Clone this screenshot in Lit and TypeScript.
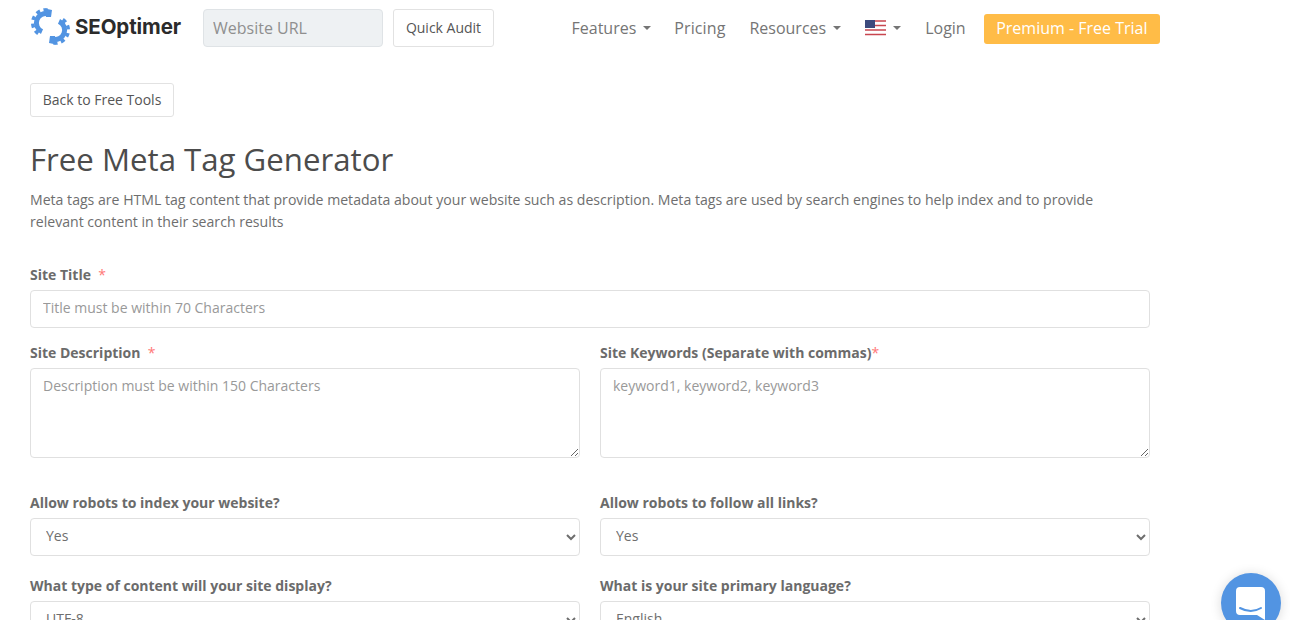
import { LitElement, html, css, svg } from 'lit';
import { customElement } from 'lit/decorators.js';

// one half of the logo, the other half is the same thing turned 180deg
const half = svg`
  <path d="M20.5 9.8A9.5 9.5 0 0 0 14 27.6" fill="none" stroke="#5294e2" stroke-width="5"/>
  <path d="M19.5 6A13 13 0 0 0 11 30" fill="none" stroke="#5294e2" stroke-width="3.5" stroke-dasharray="4 3.6"/>
  <path d="M17 4.5L24 6L23 13L18 13Z" fill="#5294e2"/>`;

@customElement('app-root')
export class AppRoot extends LitElement {
  static styles = css`
    :host {
      display: block;
      height: 620px;
      overflow: hidden;
      position: relative;
      background: #fff;
      font-family: 'Open Sans', sans-serif;
      font-size: 14px;
      color: #6e6e6e;
    }
    header {
      display: flex;
      align-items: center;
      height: 56px;
      padding-left: 30px;
      width: 1130px;
    }
    .logo {
      display: flex;
      align-items: center;
      width: 173px;
      height: 56px;
      flex: none;
    }
    .logo span {
      font-family: Inter, sans-serif;
      font-weight: 700;
      font-size: 20.5px;
      letter-spacing: -0.1px;
      color: #2b2b2b;
      margin-left: 1px;
      margin-top: -3px;
    }
    .logo svg {
      margin: -2px 0 0 -2px;
      flex: none;
    }
    .url {
      width: 180px;
      height: 38px;
      box-sizing: border-box;
      padding: 0 9px;
      background: #eef1f3;
      border: 1px solid #dfe3e6;
      border-radius: 4px;
      font: 16px 'Open Sans', sans-serif;
      margin-top: -1px;
    }
    .url::placeholder { color: #8f8f8f; opacity: 1; }
    .btn {
      display: inline-flex;
      align-items: center;
      justify-content: center;
      box-sizing: border-box;
      height: 34px;
      background: #fff;
      border: 1px solid #e2e2e2;
      border-radius: 3px;
      color: #555;
      font: 14px 'Open Sans', sans-serif;
    }
    .audit {
      width: 101px;
      height: 38px;
      margin: -1px 0 0 10px;
    }
    nav {
      display: flex;
      align-items: center;
      font-size: 16px;
      color: #757575;
      margin-left: auto;
    }
    nav a { display: inline-flex; align-items: center; margin-left: 24px; }
    nav a.pricing { margin-left: 23px; letter-spacing: 0.1px; }
    .caret {
      display: inline-block;
      width: 0;
      height: 0;
      margin-left: 7px;
      border-left: 4px solid transparent;
      border-right: 4px solid transparent;
      border-top: 4px solid #757575;
    }
    nav a.premium {
      height: 30px;
      box-sizing: border-box;
      padding: 0 12.5px 2px;
      margin: 2px 0 0 18px;
      background: #ffbc47;
      color: #fff;
      border-radius: 3px;
    }
    main {
      width: 1120px;
      padding: 27px 0 0 30px;
    }
    .back { width: 144px; padding-bottom: 2px; }
    h1 {
      font-weight: 400;
      font-size: 31.2px;
      line-height: 40px;
      color: #4c4c4c;
      margin: 22px 0 0;
    }
    .intro {
      font-size: 14.1px;
      line-height: 22.4px;
      max-width: 1100px;
      margin: 10px 0 0;
    }
    label {
      display: block;
      font-weight: 700;
      font-size: 14px;
      line-height: 20px;
      color: #6b6b6b;
    }
    label i { font-style: normal; font-weight: 400; color: #f77; }
    .field {
      display: block;
      box-sizing: border-box;
      width: 100%;
      height: 38px;
      margin-top: 5px;
      padding: 0 12px 2px;
      border: 1px solid #e0e0e0;
      border-radius: 4px;
      background: #fff;
      color: #6e6e6e;
      font: 14px 'Open Sans', sans-serif;
    }
    select.field { padding-left: 11px; }
    .field::placeholder { color: #999; opacity: 1; }
    textarea.field { height: 90px; padding: 7px 12px; line-height: 20px; }
    .title { margin-top: 31px; }
    .row {
      display: grid;
      grid-template-columns: 550px 550px;
      column-gap: 20px;
    }
    .r1 { margin-top: 15px; }
    .r2 { margin-top: 35px; }
    .r3 { margin-top: 20px; }
    .chat {
      position: absolute;
      left: 1221px;
      top: 573px;
      width: 60px;
      height: 60px;
      border-radius: 50%;
      background: #5294e2;
      box-shadow: 0 1px 12px rgba(0, 0, 0, 0.15);
      display: flex;
      justify-content: center;
      padding-top: 14px;
      box-sizing: border-box;
    }
  `;

  render() {
    return html`
      <header>
        <div class="logo">
          <svg width="46" height="46" viewBox="0 0 46 46">
            <g>${half}</g>
            <g transform="rotate(180 22.5 22.5)">${half}</g>
          </svg>
          <span>SEOptimer</span>
        </div>
        <input class="url" placeholder="Website URL" />
        <div class="btn audit">Quick Audit</div>
        <nav>
          <a>Features<span class="caret"></span></a>
          <a class="pricing">Pricing</a>
          <a>Resources<span class="caret"></span></a>
          <a>
            <svg width="21" height="16" viewBox="0 0 21 16">
              <rect width="21" height="16" fill="#fff"/>
              <path d="M0 1h21M0 5.5h21M0 10h21M0 14.5h21" stroke="#c8464f" stroke-width="1.6"/>
              <rect width="10" height="8" fill="#3c4a7d"/>
            </svg>
            <span class="caret"></span>
          </a>
          <a>Login</a>
          <a class="premium">Premium - Free Trial</a>
        </nav>
      </header>
      <main>
        <div class="btn back">Back to Free Tools</div>
        <h1>Free Meta Tag Generator</h1>
        <p class="intro">
          Meta tags are HTML tag content that provide metadata about your website such as description. Meta tags are used by search engines to help index and to provide relevant content in their search results
        </p>
        <div class="title">
          <label>Site Title &nbsp;<i>*</i></label>
          <input class="field" placeholder="Title must be within 70 Characters" />
        </div>
        <div class="row r1">
          <div>
            <label>Site Description &nbsp;<i>*</i></label>
            <textarea class="field" placeholder="Description must be within 150 Characters"></textarea>
          </div>
          <div>
            <label>Site Keywords (Separate with commas)<i>*</i></label>
            <textarea class="field" placeholder="keyword1, keyword2, keyword3"></textarea>
          </div>
        </div>
        <div class="row r2">
          <div>
            <label>Allow robots to index your website?</label>
            <select class="field"><option>Yes</option></select>
          </div>
          <div>
            <label>Allow robots to follow all links?</label>
            <select class="field"><option>Yes</option></select>
          </div>
        </div>
        <div class="row r3">
          <div>
            <label>What type of content will your site display?</label>
            <select class="field"><option>UTF-8</option></select>
          </div>
          <div>
            <label>What is your site primary language?</label>
            <select class="field"><option>English</option></select>
          </div>
        </div>
      </main>
      <div class="chat">
        <svg width="30" height="34" viewBox="0 0 30 34">
          <path d="M4 0H25Q29 0 29 4V33L21 28H4Q0 28 0 24V4Q0 0 4 0Z" fill="#fff"/>
          <path d="M4 21Q15 27 25 21" fill="none" stroke="#5294e2" stroke-width="2" stroke-linecap="round"/>
        </svg>
      </div>
    `;
  }
}
